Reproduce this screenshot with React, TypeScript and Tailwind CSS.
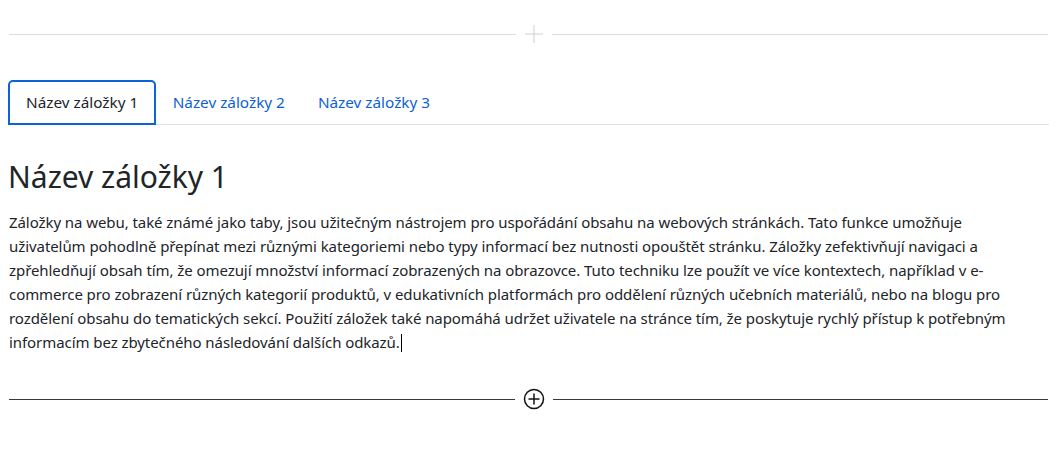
import { useState } from 'react'

const tabs = ['Název záložky 1', 'Název záložky 2', 'Název záložky 3']

const lines = [
  'Záložky na webu, také známé jako taby, jsou užitečným nástrojem pro uspořádání obsahu na webových stránkách. Tato funkce umožňuje',
  'uživatelům pohodlně přepínat mezi různými kategoriemi nebo typy informací bez nutnosti opouštět stránku. Záložky zefektivňují navigaci a',
  'zpřehledňují obsah tím, že omezují množství informací zobrazených na obrazovce. Tuto techniku lze použít ve více kontextech, například v e-',
  'commerce pro zobrazení různých kategorií produktů, v edukativních platformách pro oddělení různých učebních materiálů, nebo na blogu pro',
  'rozdělení obsahu do tematických sekcí. Použití záložek také napomáhá udržet uživatele na stránce tím, že poskytuje rychlý přístup k potřebným',
]

export default function App() {
  const [active, setActive] = useState(0)

  return (
    <div className="min-h-[459px] bg-white font-['Noto_Sans',sans-serif] text-[#212529]">
      {/* ── Top inserter ───────────────────────────────────── */}
      <div className="flex items-center px-[9px] pt-[25px]">
        <div className="h-px w-[507px] bg-[#dcdcdc]" />
        <svg className="mx-[9px] shrink-0" width="18" height="18" viewBox="0 0 18 18">
          <path d="M9 0v18M0 9h18" stroke="#cfcfcf" strokeWidth="1" />
        </svg>
        <div className="h-px flex-1 bg-[#dcdcdc]" />
      </div>

      {/* ── Tabs ───────────────────────────────────────────── */}
      <div className="mt-[37px] px-2">
        <ul className="flex border-b border-[#dee2e6]">
          {tabs.map((t, i) => (
            <li key={t} className="-mb-px">
              <button
                onClick={() => setActive(i)}
                className={
                  i === active
                    ? 'h-[45px] rounded-t-[5px] border-2 border-[#0b63d8] bg-white px-[16px] text-[15.3px] text-[#212529]'
                    : 'h-[45px] border-2 border-transparent px-[14.5px] text-[15.3px] text-[#0d5fd6]'
                }
              >
                {t}
              </button>
            </li>
          ))}
        </ul>

        {/* ── Panel ──────────────────────────────────────────── */}
        <h2 className="mt-[33px] text-[30px] leading-[38px] font-normal">{tabs[active]}</h2>
        <p className="mt-[14px] pl-px text-[15px] leading-6 tracking-[-0.07px] whitespace-nowrap">
          {lines.map((l) => (
            <span key={l}>
              {l}
              <br />
            </span>
          ))}
          informacím bez zbytečného následování dalších odkazů.
          <span className="ml-px inline-block h-[18px] w-px bg-black align-[-4px]" />
        </p>
      </div>

      {/* ── Bottom inserter ────────────────────────────────── */}
      <div className="mt-[34px] flex items-center px-[9px]">
        <div className="h-px w-[506px] bg-[#3a3a3a]" />
        <svg className="mx-[8px] shrink-0" width="22" height="22" viewBox="0 0 22 22">
          <circle cx="11" cy="11" r="9.5" fill="none" stroke="#111" strokeWidth="1.5" />
          <path d="M11 5.5v11M5.5 11h11" stroke="#111" strokeWidth="1.5" />
        </svg>
        <div className="h-px flex-1 bg-[#3a3a3a]" />
      </div>
    </div>
  )
}
